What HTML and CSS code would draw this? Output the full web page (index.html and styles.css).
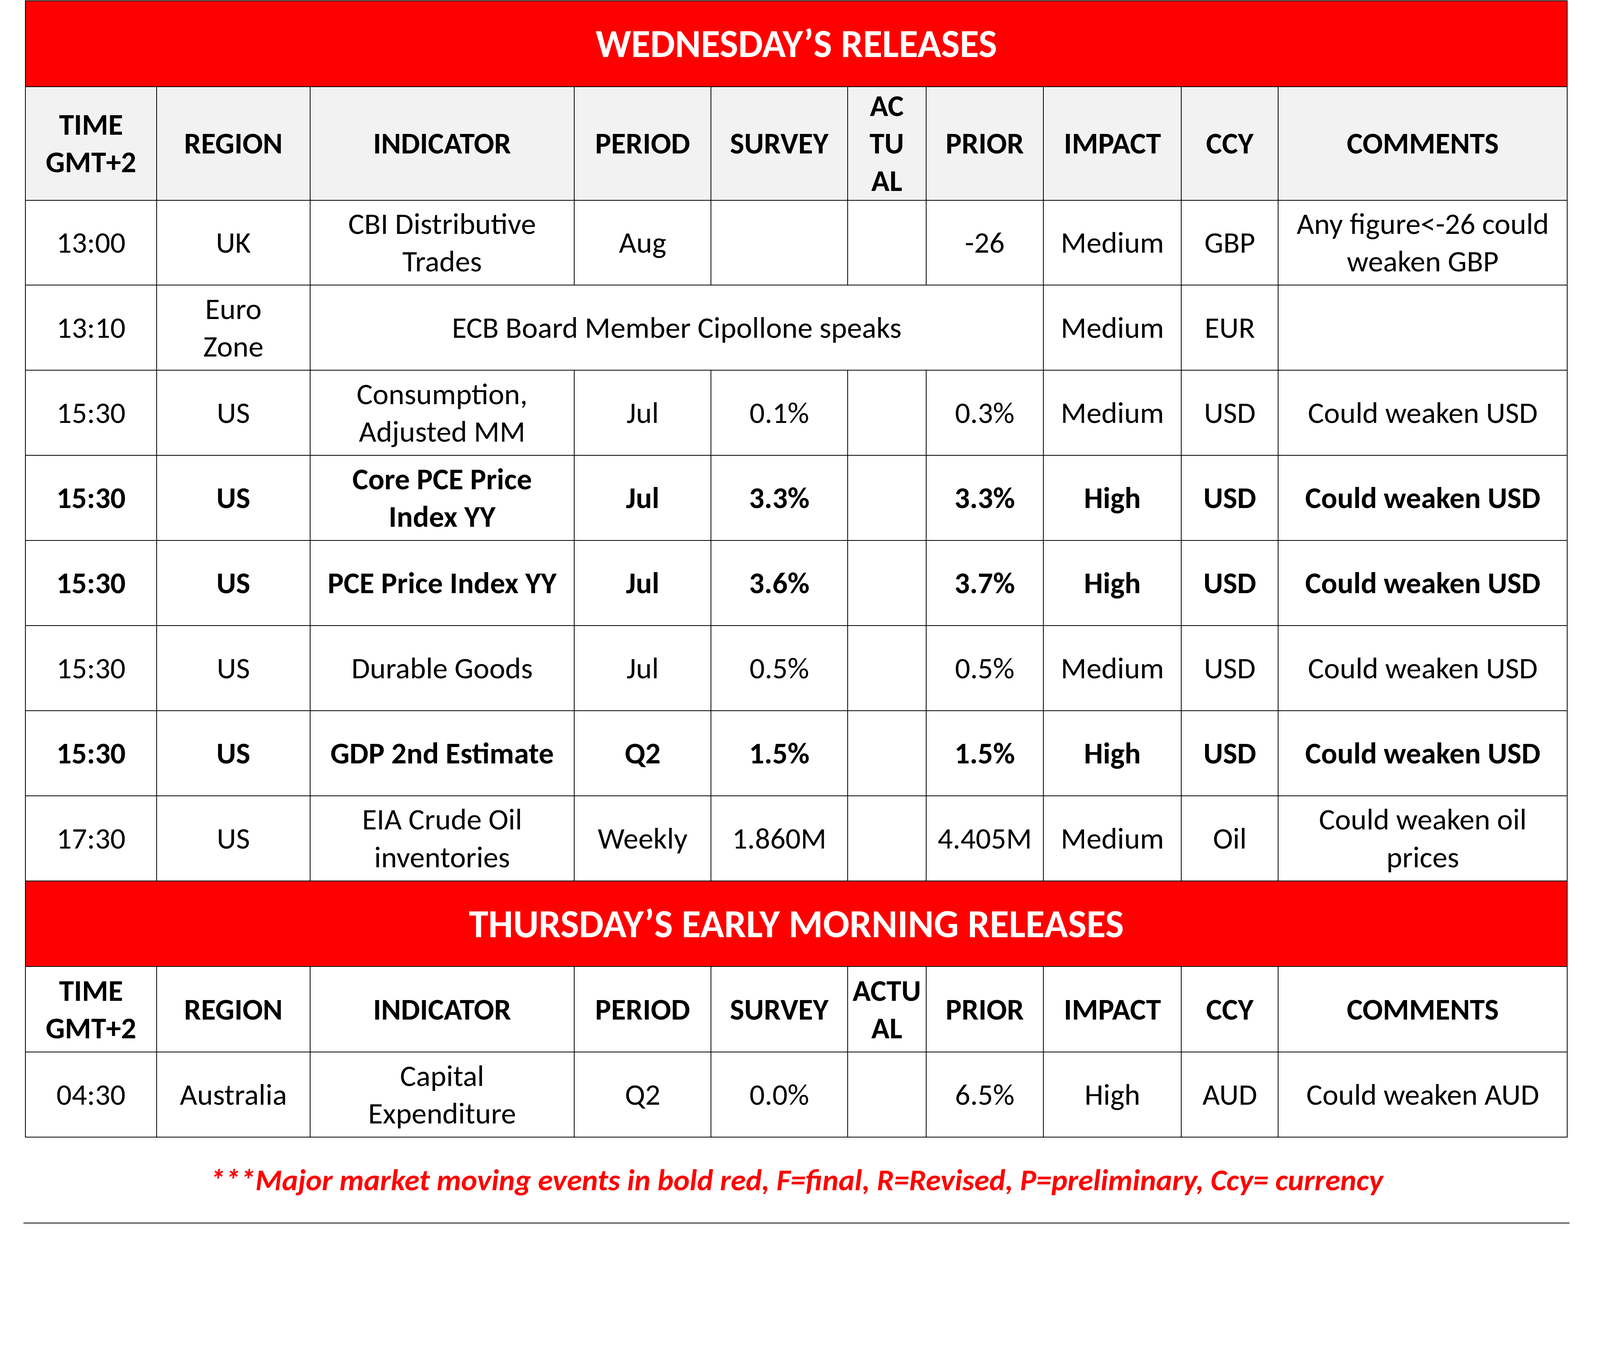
FILE: index.html
```html
<!DOCTYPE html>
<html lang="en">
<head>
<meta charset="utf-8">
<title>Wednesday's Releases</title>
<link rel="stylesheet" href="styles.css">
</head>
<body>
<div class="page">
  <table class="cal">
    <colgroup>
      <col class="c-time"><col class="c-region"><col class="c-ind"><col class="c-period"><col class="c-survey">
      <col class="c-actual"><col class="c-prior"><col class="c-impact"><col class="c-ccy"><col class="c-comm">
    </colgroup>
    <tbody>
      <tr class="banner"><td colspan="10">WEDNESDAY’S RELEASES</td></tr>
      <tr class="head">
        <th>TIME<br>GMT+2</th><th>REGION</th><th>INDICATOR</th><th>PERIOD</th><th>SURVEY</th>
        <th>AC<br>TU<br>AL</th><th>PRIOR</th><th>IMPACT</th><th>CCY</th><th>COMMENTS</th>
      </tr>
      <tr class="row">
        <td>13:00</td><td>UK</td><td>CBI Distributive<br>Trades</td><td>Aug</td><td></td>
        <td></td><td>-26</td><td>Medium</td><td>GBP</td><td>Any figure&lt;-26 could<br>weaken GBP</td>
      </tr>
      <tr class="row">
        <td>13:10</td><td>Euro<br>Zone</td><td colspan="5">ECB Board Member Cipollone speaks</td>
        <td>Medium</td><td>EUR</td><td></td>
      </tr>
      <tr class="row">
        <td>15:30</td><td>US</td><td>Consumption,<br>Adjusted MM</td><td>Jul</td><td>0.1%</td>
        <td></td><td>0.3%</td><td>Medium</td><td>USD</td><td>Could weaken USD</td>
      </tr>
      <tr class="row bold">
        <td>15:30</td><td>US</td><td>Core PCE Price<br>Index YY</td><td>Jul</td><td>3.3%</td>
        <td></td><td>3.3%</td><td>High</td><td>USD</td><td>Could weaken USD</td>
      </tr>
      <tr class="row bold">
        <td>15:30</td><td>US</td><td>PCE Price Index YY</td><td>Jul</td><td>3.6%</td>
        <td></td><td>3.7%</td><td>High</td><td>USD</td><td>Could weaken USD</td>
      </tr>
      <tr class="row">
        <td>15:30</td><td>US</td><td>Durable Goods</td><td>Jul</td><td>0.5%</td>
        <td></td><td>0.5%</td><td>Medium</td><td>USD</td><td>Could weaken USD</td>
      </tr>
      <tr class="row bold">
        <td>15:30</td><td>US</td><td>GDP 2nd Estimate</td><td>Q2</td><td>1.5%</td>
        <td></td><td>1.5%</td><td>High</td><td>USD</td><td>Could weaken USD</td>
      </tr>
      <tr class="row">
        <td>17:30</td><td>US</td><td>EIA Crude Oil<br>inventories</td><td>Weekly</td><td>1.860M</td>
        <td></td><td>4.405M</td><td>Medium</td><td>Oil</td><td>Could weaken oil<br>prices</td>
      </tr>
      <tr class="banner"><td colspan="10">THURSDAY’S EARLY MORNING RELEASES</td></tr>
      <tr class="head head-plain">
        <th>TIME<br>GMT+2</th><th>REGION</th><th>INDICATOR</th><th>PERIOD</th><th>SURVEY</th>
        <th>ACTU<br>AL</th><th>PRIOR</th><th>IMPACT</th><th>CCY</th><th>COMMENTS</th>
      </tr>
      <tr class="row">
        <td>04:30</td><td>Australia</td><td>Capital<br>Expenditure</td><td>Q2</td><td>0.0%</td>
        <td></td><td>6.5%</td><td>High</td><td>AUD</td><td>Could weaken AUD</td>
      </tr>
    </tbody>
  </table>
  <div class="note">***Major market moving events in bold red, F=final, R=Revised, P=preliminary, Ccy= currency</div>
</div>
</body>
</html>
```

FILE: styles.css
```css
:root {
  /* one pixel of the 4361px-wide design */
  --u: calc(100vw / 4361);
}

html, body {
  margin: 0;
  padding: 0;
  background: #ffffff;
  overflow: hidden;
}

body {
  font-family: Carlito, Lato, "Liberation Sans", sans-serif;
  color: #000000;
}

.page {
  padding: calc(1 * var(--u)) 0 0 calc(68 * var(--u));
  width: calc(4220 * var(--u));
}

.cal {
  border-collapse: collapse;
  table-layout: fixed;
  width: calc(4203 * var(--u));
}

.c-time { width: calc(358 * var(--u)); }
.c-region { width: calc(418 * var(--u)); }
.c-ind { width: calc(720 * var(--u)); }
.c-period { width: calc(373 * var(--u)); }
.c-survey { width: calc(372 * var(--u)); }
.c-actual { width: calc(214 * var(--u)); }
.c-prior { width: calc(320 * var(--u)); }
.c-impact { width: calc(376 * var(--u)); }
.c-ccy { width: calc(264 * var(--u)); }
.c-comm { width: calc(788 * var(--u)); }

.cal td,
.cal th {
  border: calc(3 * var(--u)) solid #000000;
  text-align: center;
  vertical-align: middle;
  font-size: calc(82 * var(--u));
  line-height: 1.25;
  padding: 0 calc(4 * var(--u));
  box-sizing: border-box;
  white-space: nowrap;
}

.cal th {
  font-weight: bold;
}

.banner td {
  background: #ff0000;
  color: #ffffff;
  font-weight: bold;
  font-size: calc(107 * var(--u));
  height: calc(234 * var(--u));
}

.head th {
  background: #f2f2f2;
  height: calc(307 * var(--u));
}

.head-plain th {
  background: #ffffff;
  height: calc(233 * var(--u));
}

.row td {
  height: calc(232 * var(--u));
}

.bold td {
  font-weight: bold;
}

.note {
  margin-left: calc(-4 * var(--u));
  width: calc(4214 * var(--u));
  height: calc(234 * var(--u));
  box-sizing: border-box;
  border-bottom: calc(3 * var(--u)) solid #000000;
  display: flex;
  align-items: center;
  justify-content: center;
  color: #ff0000;
  font-weight: bold;
  font-style: italic;
  font-size: calc(83 * var(--u));
  line-height: 1.25;
}
```
